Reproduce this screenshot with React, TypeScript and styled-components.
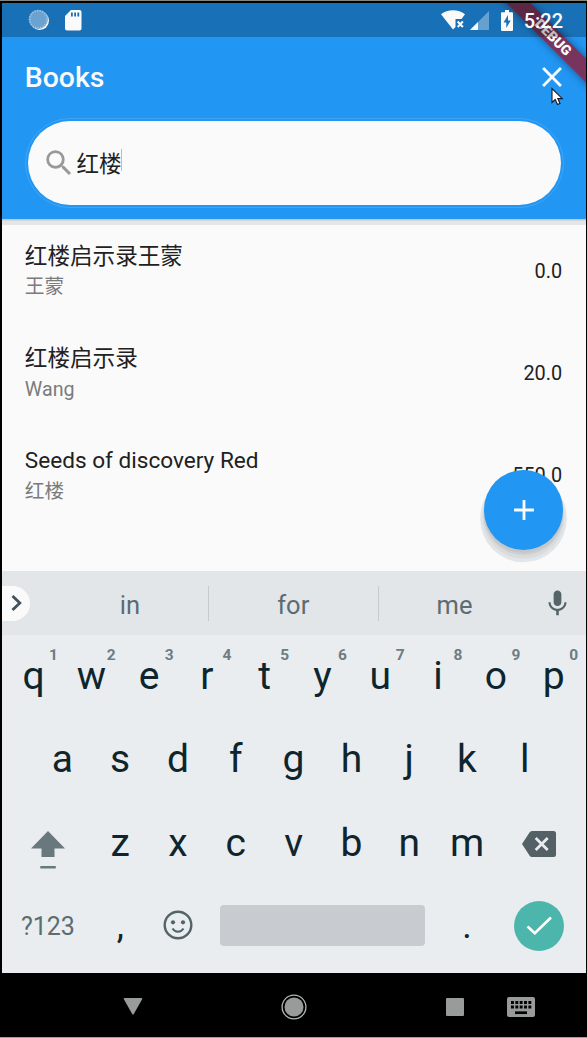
import React from "react";
import styled, { createGlobalStyle } from "styled-components";
import { MdAdd, MdClose, MdMic, MdSearch } from "react-icons/md";

const GlobalStyle = createGlobalStyle`
  * { box-sizing: border-box; }
  body {
    margin: 0;
    background: #000;
    font-family: Roboto, "Noto Sans CJK SC", sans-serif;
  }
  svg { display: block; flex: none; }
`;

const Device = styled.div`
  position: relative;
  display: flex;
  flex-direction: column;
  width: 587px;
  height: 1038px;
  padding: 2px 1px 0 2px;
  background: #000;
  border-top: 1px solid #85857f;
  border-bottom: 1px solid #a0a0a0;
  overflow: hidden;
`;

/* Translucent scrim that sits above the app bar and the debug ribbon. */
const StatusBar = styled.header`
  position: relative;
  z-index: 4;
  display: flex;
  align-items: center;
  height: 34px;
  padding: 0 23px 0 26px;
  background: rgba(0, 0, 0, 0.25);
  color: #fafafa;
`;

const StatusGroup = styled.div<{ $gap: number }>`
  display: flex;
  align-items: center;
  gap: ${(p) => p.$gap}px;
`;

const Spacer = styled.div`
  flex: 1;
`;

const Clock = styled.span`
  margin-left: 11px;
  padding-top: 1px;
  font-size: 20px;
  font-weight: 500;
  line-height: 34px;
`;

const AppBar = styled.div`
  position: relative;
  z-index: 1;
  height: 216px;
  margin-top: -34px;
  padding-top: 34px;
  background: #2196f3;
  color: #fafafa;
  box-shadow: 0 1px 0 #c9c9c9, 0 2px 0 #d3d5d6, 0 6px 0 #e2e6e9;
`;

const Toolbar = styled.div`
  display: flex;
  align-items: center;
  justify-content: space-between;
  height: 80px;
  padding: 0 17px 0 22.8px;
`;

const Title = styled.h1`
  margin: 2px 0 0;
  font-size: 28.4px;
  font-weight: 500;
  line-height: 36px;
`;

const SearchField = styled.label`
  display: flex;
  align-items: center;
  width: 533px;
  height: 83.5px;
  margin: 4px 0 0 25.5px;
  padding-left: 14px;
  border-radius: 42px;
  background: #fafafa;
  color: #999;
  outline: 1px solid rgba(255, 255, 255, 0.14);
  outline-offset: 2px;
`;

const Query = styled.span`
  margin: 3px 0 0 1px;
  font-size: 22.5px;
  line-height: 30px;
  color: #212121;
`;

const Caret = styled.span`
  width: 1.5px;
  height: 22px;
  margin: -6px 0 0 -1px;
  background: #90caf9;
`;

const BookList = styled.main`
  height: 352px;
  background: #fafafa;
  overflow: hidden;
`;

const Tile = styled.div`
  display: flex;
  align-items: center;
  justify-content: space-between;
  height: 102.2px;
  padding: 0 23.8px 0 22.8px;
`;

const TileText = styled.div`
  display: flex;
  flex-direction: column;
  gap: 2.5px;
  margin-top: 4px;
`;

const BookName = styled.div`
  font-size: 22.6px;
  line-height: 28px;
  color: #212121;
`;

const Author = styled.div`
  font-size: 19.7px;
  line-height: 28px;
  color: #7b7b7b;
`;

const Price = styled.div`
  margin-top: 3px;
  font-size: 19.9px;
  line-height: 28px;
  color: #212121;
`;

const Fab = styled.button`
  position: absolute;
  right: 23.7px;
  top: 469px;
  z-index: 2;
  display: flex;
  align-items: center;
  justify-content: center;
  width: 79.5px;
  height: 79.5px;
  padding: 0;
  border: 0;
  border-radius: 50%;
  background: #2196f3;
  color: #fafafa;
  box-shadow: 0 3px 0 0 #c5c6c7, 0 4.5px 0 0.5px #cecfd0, 0 7px 1px 1.5px #d9dbdc, 0 8.5px 0 3.8px #e2e6e9;
`;

const Suggestions = styled.div`
  display: flex;
  align-items: center;
  height: 64px;
  background: #e2e6e9;
  color: #546469;
`;

const Expander = styled.div`
  display: flex;
  align-items: center;
  width: 28px;
  height: 35px;
  padding-left: 8px;
  border-radius: 0 17.5px 17.5px 0;
  background: #fafafa;
`;

const Words = styled.div`
  display: flex;
  align-items: center;
  width: 479px;
  margin: 0 10.5px 0 22.5px;
`;

const Word = styled.div<{ $width: number }>`
  width: ${(p) => p.$width}px;
  height: 35px;
  font-size: 25.5px;
  line-height: 38px;
  text-align: center;
  color: #5c6c71;

  & + & {
    border-left: 1.5px solid #c8caca;
  }
`;

const Keyboard = styled.div`
  height: 338px;
  padding: 0 3.4px 0 2.6px;
  background: #e9edf0;
`;

const KeyRow = styled.div<{ $first?: boolean; $inset?: boolean }>`
  display: flex;
  height: 83.5px;
  margin-top: ${(p) => (p.$first ? -2 : 0)}px;
  padding: 0 ${(p) => (p.$inset ? 28.9 : 0)}px;
`;

const Key = styled.div<{ $span?: number; $size?: number; $drop?: number }>`
  position: relative;
  display: flex;
  align-items: center;
  justify-content: center;
  flex: ${(p) => p.$span ?? 1} 0 0;
  min-width: 0;
  padding-top: ${(p) => p.$drop ?? 2}px;
  font-size: ${(p) => p.$size ?? 39}px;
  color: ${(p) => (p.$size === 25 ? "#5c6c71" : "#0f252e")};
`;

const Hint = styled.sup`
  position: absolute;
  left: 50%;
  top: 13px;
  width: 40px;
  font-size: 15.5px;
  font-weight: 700;
  line-height: 18px;
  text-align: center;
  color: #6f7c81;
`;

const SpaceBar = styled.div`
  width: 205px;
  height: 41px;
  border-radius: 4px;
  background: #c8ccd0;
`;

const Enter = styled.div`
  display: flex;
  align-items: center;
  justify-content: center;
  width: 50px;
  height: 50px;
  border-radius: 50%;
  background: #4db6ac;
`;

const NavBar = styled.nav`
  display: flex;
  align-items: center;
  height: 64px;
  padding: 3px 51.5px 0 120.5px;
  background: #000;
`;

const NavGap = styled.div<{ $width: number }>`
  width: ${(p) => p.$width}px;
`;

const DebugCorner = styled.div`
  position: absolute;
  top: 2px;
  right: 1px;
  z-index: 3;
  width: 110px;
  height: 110px;
  overflow: hidden;
  pointer-events: none;
`;

const DebugRibbon = styled.div`
  position: absolute;
  left: -23.5px;
  top: 26px;
  width: 200px;
  height: 17px;
  transform: rotate(45deg);
  background: rgba(160, 10, 28, 0.7);
  box-shadow: 0 0 8px rgba(0, 0, 0, 0.4);
  color: #fff;
  font-size: 14px;
  font-weight: 900;
  line-height: 17.5px;
  text-align: center;
`;

const Pointer = styled.svg`
  position: absolute;
  left: 551px;
  top: 86px;
  z-index: 5;
`;

const books = [
  { name: "红楼启示录王蒙", author: "王蒙", price: "0.0" },
  { name: "红楼启示录", author: "Wang", price: "20.0" },
  { name: "Seeds of discovery Red", author: "红楼", price: "550.0" },
];

const SyncIcon = () => (
  <svg width="22" height="22" viewBox="0 0 22 22">
    <circle cx="11.6" cy="11.6" r="9.4" fill="#fafafa" />
    <circle cx="10.3" cy="10.3" r="9.6" fill="#6aa2d0" />
    <circle cx="10.3" cy="10.3" r="8.6" fill="none" stroke="#9dc2e0" strokeWidth="1.8" strokeDasharray="1.2 1.4" />
  </svg>
);

const SdIcon = () => (
  <svg width="17" height="21" viewBox="0 0 17 21">
    <path d="M6 0h8.5a2 2 0 0 1 2 2v16.5a2 2 0 0 1-2 2H2a2 2 0 0 1-2-2V6z" fill="#fafafa" />
    <path d="M6 2.5h1.8v4H6zM9.2 2.5H11v4H9.200zM12.400 2.500h1.800v4h-1.800z" fill="#1b70b6" />
  </svg>
);

const WifiIcon = () => (
  <svg width="24" height="20" viewBox="0 0 24 20">
    <path d="M0 4.200C6.500-1.200 17.500-1.200 24 4.200L20.500 9H14.500v8L12 19.500z" fill="#fafafa" />
    <path d="M16.700 11.500l5.200 5.500M21.900 11.500l-5.200 5.500" stroke="#fafafa" strokeWidth="2" />
  </svg>
);

const SignalIcon = () => (
  <svg width="19" height="19" viewBox="0 0 19 19">
    <path d="M19 0v19H0z" fill="#64a0d0" />
    <path d="M8 11v8H0z" fill="#fafafa" />
  </svg>
);

const BatteryIcon = () => (
  <svg width="12" height="21" viewBox="0 0 12 21">
    <path d="M4 0h4v2.200h3a1 1 0 0 1 1 1V20a1 1 0 0 1-1 1H1a1 1 0 0 1-1-1V3.200a1 1 0 0 1 1-1h3z" fill="#fafafa" />
    <path d="M7 5L2.500 12.500H5.300V18L9.700 10.500H7z" fill="#1b70b6" />
  </svg>
);

const ShiftIcon = () => (
  <svg width="34" height="38" viewBox="0 0 34 38">
    <path d="M17 0L34 17.500H23.500V26H10.500V17.500H0z" fill="#69787d" />
    <path d="M9.300 35h15.500v2.500H9.300z" fill="#69787d" />
  </svg>
);

const BackspaceIcon = () => (
  <svg width="34" height="26" viewBox="0 0 34 26">
    <path d="M10 0H31.500A2.500 2.500 0 0 1 34 2.500V23.500A2.500 2.500 0 0 1 31.500 26H10Q8.500 26 7.500 24.500L0 13 7.500 1.500Q8.500 0 10 0z" fill="#536167" />
    <path d="M13.700 7L25.700 19M25.700 7L13.700 19" stroke="#e9edf0" strokeWidth="2.700" />
  </svg>
);

const SmileIcon = () => (
  <svg width="30" height="30" viewBox="0 0 30 30">
    <circle cx="15" cy="15" r="13.300" fill="none" stroke="#536369" strokeWidth="2.400" />
    <circle cx="10" cy="12.300" r="2.100" fill="#536369" />
    <circle cx="20" cy="12.300" r="2.100" fill="#536369" />
    <path d="M9.500 18.500Q11.500 21.700 15 21.700T20.500 18.500" fill="none" stroke="#536369" strokeWidth="2" />
  </svg>
);

const CheckIcon = () => (
  <svg width="26" height="20" viewBox="0 0 26 20">
    <path d="M1.500 10.500L8.800 17.300L25 1.500" fill="none" stroke="#fff" strokeWidth="2.600" />
  </svg>
);

const KeyboardIcon = () => (
  <svg width="28" height="20" viewBox="0 0 28 20">
    <rect width="28" height="20" rx="2" fill="#999b9a" />
    <path d="M4 5.500H24.500M4 10H24.500" stroke="#000" strokeWidth="2.800" strokeDasharray="2.900 1.450" />
    <path d="M8 15.700H20" stroke="#000" strokeWidth="2.700" />
  </svg>
);

export default function App() {
  return (
    <Device>
      <GlobalStyle />
      <StatusBar>
        <StatusGroup $gap={15}>
          <SyncIcon />
          <SdIcon />
        </StatusGroup>
        <Spacer />
        <WifiIcon />
        <NavGap $width={4.5} />
        <SignalIcon />
        <NavGap $width={12} />
        <BatteryIcon />
        <Clock>5:22</Clock>
      </StatusBar>
      <AppBar>
        <Toolbar>
          <Title>Books</Title>
          <MdClose size={34} />
        </Toolbar>
        <SearchField>
          <MdSearch size={34} />
          <Query>红楼</Query>
          <Caret />
        </SearchField>
      </AppBar>
      <BookList>
        {books.map((book) => (
          <Tile key={book.name}>
            <TileText>
              <BookName>{book.name}</BookName>
              <Author>{book.author}</Author>
            </TileText>
            <Price>{book.price}</Price>
          </Tile>
        ))}
      </BookList>
      <Suggestions>
        <Expander>
          <svg width="13" height="18" viewBox="0 0 13 18">
            <path d="M2.500 2L9.800 9L2.500 16" fill="none" stroke="#40525a" strokeWidth="2.800" />
          </svg>
        </Expander>
        <Words>
          <Word $width={155}>in</Word>
          <Word $width={170.5}>for</Word>
          <Word $width={152}>me</Word>
        </Words>
        <MdMic size={31} />
      </Suggestions>
      <Keyboard>
        <KeyRow $first>
          {[..."qwertyuiop"].map((letter, i) => (
            <Key key={letter}>
              {letter}
              <Hint>{(i + 1) % 10}</Hint>
            </Key>
          ))}
        </KeyRow>
        <KeyRow $inset>
          {[..."asdfghjkl"].map((letter) => (
            <Key key={letter}>{letter}</Key>
          ))}
        </KeyRow>
        <KeyRow>
          <Key $span={1.5} $drop={16}>
            <ShiftIcon />
          </Key>
          {[..."zxcvbnm"].map((letter) => (
            <Key key={letter}>{letter}</Key>
          ))}
          <Key $span={1.5} $drop={4}>
            <BackspaceIcon />
          </Key>
        </KeyRow>
        <KeyRow>
          <Key $span={1.5} $size={25}>
            ?123
          </Key>
          <Key $size={36}>,</Key>
          <Key $drop={0}>
            <SmileIcon />
          </Key>
          <Key $span={4} $drop={0}>
            <SpaceBar />
          </Key>
          <Key $size={36}>.</Key>
          <Key $span={1.5} $drop={2}>
            <Enter>
              <CheckIcon />
            </Enter>
          </Key>
        </KeyRow>
      </Keyboard>
      <NavBar>
        <svg width="20" height="17" viewBox="0 0 20 17">
          <path d="M1.500 0H18.500Q20 0 19 1.500L10.800 16Q10 17 9.200 16L1 1.500Q0 0 1.500 0z" fill="#999b9a" />
        </svg>
        <Spacer />
        <svg width="26" height="26" viewBox="0 0 26 26">
          <circle cx="13" cy="13" r="11.900" fill="none" stroke="#b4b5b5" strokeWidth="1.300" />
          <circle cx="13" cy="13" r="9.500" fill="#999b9a" />
        </svg>
        <NavGap $width={139.5} />
        <svg width="18" height="18" viewBox="0 0 18 18">
          <rect width="18" height="18" rx="1" fill="#999b9a" />
        </svg>
        <NavGap $width={42.5} />
        <KeyboardIcon />
      </NavBar>
      <Fab aria-label="Add">
        <MdAdd size={34} />
      </Fab>
      <DebugCorner>
        <DebugRibbon>DEBUG</DebugRibbon>
      </DebugCorner>
      <Pointer width="13" height="19" viewBox="0 0 13 19">
        <path d="M1 1.500V15.500L4.200 12.500L6.500 17.500L9 16.400L6.800 11.600H11.300z" fill="#fff" stroke="#111a2c" strokeWidth="1.100" />
      </Pointer>
    </Device>
  );
}
